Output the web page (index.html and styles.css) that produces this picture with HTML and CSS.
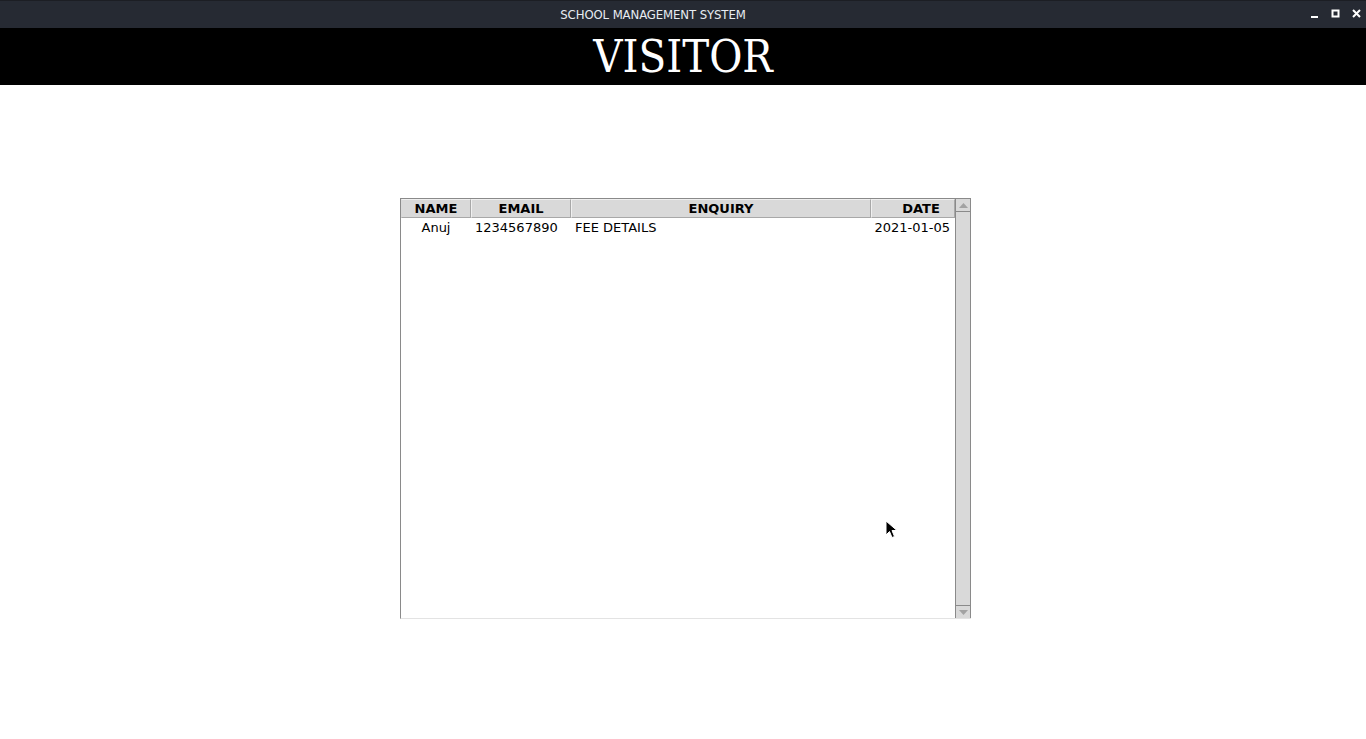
FILE: index.html
```html
<!DOCTYPE html>
<html>
<head>
<meta charset="utf-8">
<link rel="stylesheet" href="styles.css">
</head>
<body>
<div class="titlebar">
  <span class="title">SCHOOL MANAGEMENT SYSTEM</span>
  <div class="controls">
    <svg width="10" height="10" viewBox="0 0 10 10"><rect x="1" y="7" width="7" height="2" fill="#fff"/></svg>
    <svg width="10" height="10" viewBox="0 0 10 10"><rect x="1.5" y="1.5" width="6" height="6" fill="none" stroke="#fff" stroke-width="2"/></svg>
    <svg width="10" height="10" viewBox="0 0 10 10"><path d="M1 1 L8 8 M8 1 L1 8" stroke="#fff" stroke-width="2"/></svg>
  </div>
</div>
<div class="banner">VISITOR</div>
<main class="content">
  <div class="tablebox">
    <div class="table">
      <div class="row head">
        <div class="cell c1">NAME</div>
        <div class="cell c2">EMAIL</div>
        <div class="cell c3">ENQUIRY</div>
        <div class="cell c4 hdate">DATE</div>
      </div>
      <div class="row data">
        <div class="cell c1">Anuj</div>
        <div class="cell c2 left">1234567890</div>
        <div class="cell c3 left">FEE DETAILS</div>
        <div class="cell c4 right">2021-01-05</div>
      </div>
    </div>
    <div class="scrollbar">
      <div class="arrow up"><svg width="9" height="5" viewBox="0 0 9 5"><path d="M0 5 L4.5 0 L9 5 Z" fill="#a3a3a3"/></svg></div>
      <div class="trough"></div>
      <div class="arrow down"><svg width="9" height="5" viewBox="0 0 9 5"><path d="M0 0 L4.5 5 L9 0 Z" fill="#a3a3a3"/></svg></div>
    </div>
  </div>
</main>
<svg class="cursor" width="14" height="20" viewBox="0 0 14 20"><path d="M1 1 L1 15 L4.5 11.5 L7 17.5 L9.5 16.5 L7 10.5 L12 10.5 Z" fill="#000" stroke="#fff" stroke-width="1"/></svg>
</body>
</html>
```
FILE: styles.css
```css
html, body {
  margin: 0;
  padding: 0;
  background: #ffffff;
  width: 1366px;
  height: 739px;
  overflow: hidden;
  position: relative;
}
.titlebar {
  height: 28px;
  background: #262a33;
  border-top: 1px solid #1c1e24;
  box-sizing: border-box;
  display: flex;
  align-items: center;
  justify-content: center;
  position: relative;
}
.title {
  color: #e8ecf2;
  font-family: "DejaVu Sans Condensed", "DejaVu Sans", sans-serif;
  font-size: 13px;
  letter-spacing: -0.1px;
  margin-right: 60px;
}
.controls {
  position: absolute;
  right: 4px;
  top: 8px;
  display: flex;
  gap: 11px;
}
.controls svg { display: block; }
.banner {
  height: 57px;
  background: #000;
  color: #fff;
  font-family: "DejaVu Serif Condensed", "DejaVu Serif", serif;
  font-size: 45px;
  line-height: 57px;
  text-align: center;
}
.content {
  display: flex;
  justify-content: center;
  padding-top: 113px;
  padding-left: 5px;
}
.tablebox {
  width: 571px;
  height: 421px;
  box-sizing: border-box;
  border-left: 1px solid #8a8a8a;
  border-top: 1px solid #8a8a8a;
  border-bottom: 1px solid #e3e3e3;
  display: flex;
}
.table {
  width: 554px;
  font-family: "DejaVu Sans", sans-serif;
  font-size: 13px;
  color: #000;
}
.row {
  display: flex;
}
.head .cell {
  height: 19px;
  box-sizing: border-box;
  background: #d9d9d9;
  border: 1px solid #a8a8a8;
  border-top-color: #f0f0f0;
  border-left-color: #f0f0f0;
  font-weight: bold;
  line-height: 17px;
  text-align: center;
}
.head .cell:first-child { border-left-color: #d9d9d9; }
.head .hdate { padding-left: 16px; }
.data .cell {
  height: 20px;
  line-height: 20px;
  text-align: center;
}
.c1 { width: 70px; }
.c2 { width: 100px; }
.c3 { width: 300px; }
.c4 { width: 84px; }
.data .left { text-align: left; padding-left: 4px; box-sizing: border-box; }
.data .right { text-align: right; padding-right: 5px; box-sizing: border-box; }
.scrollbar {
  width: 16px;
  display: flex;
  flex-direction: column;
  background: #d9d9d9;
  border-left: 1px solid #8a8a8a;
  border-right: 1px solid #8a8a8a;
  box-sizing: border-box;
}
.arrow {
  height: 12px;
  display: flex;
  align-items: center;
  justify-content: center;
  border-bottom: 1px solid #8a8a8a;
  background: #d9d9d9;
}
.arrow.down { border-bottom: none; border-top: 1px solid #8a8a8a; }
.trough { flex: 1; background: #d9d9d9; }
.cursor {
  position: absolute;
  left: 885px;
  top: 520px;
}
```
